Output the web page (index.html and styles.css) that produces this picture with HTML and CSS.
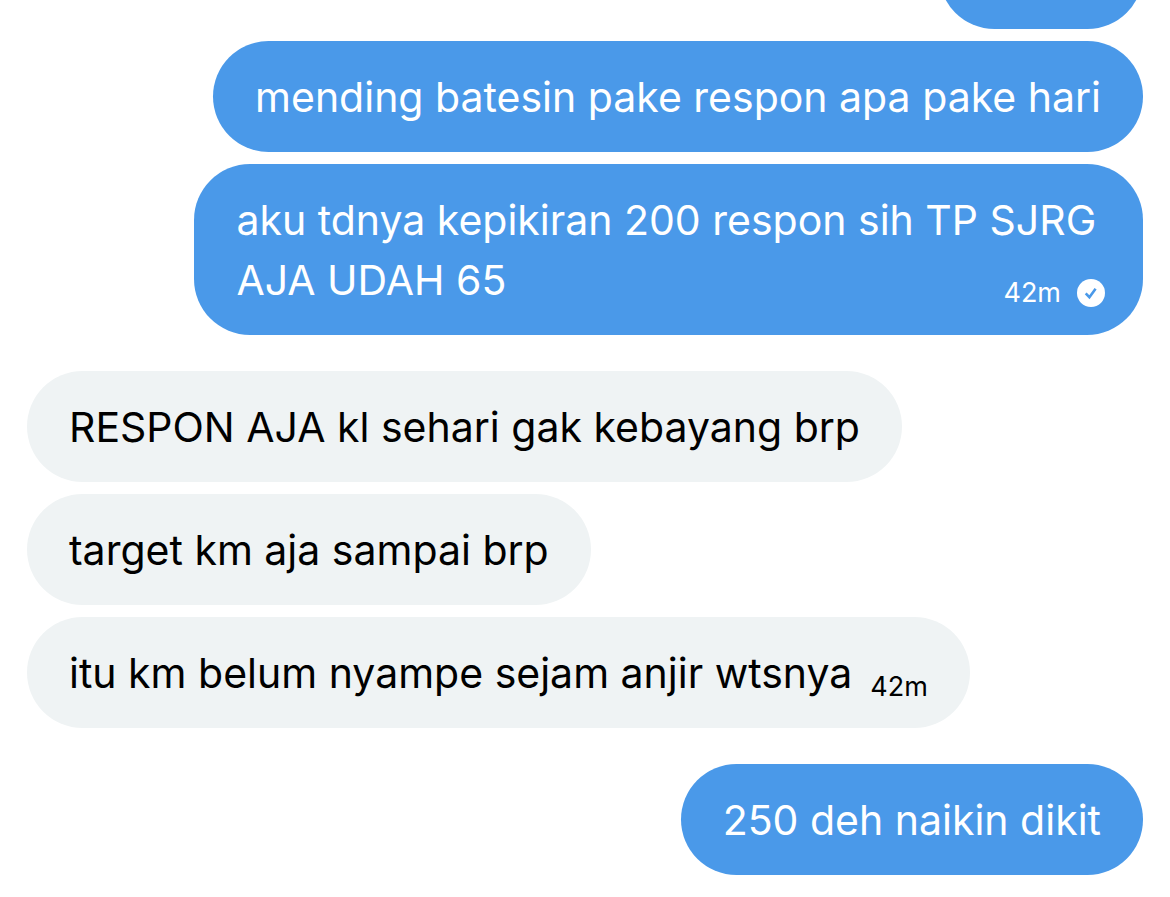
FILE: index.html
```
<!DOCTYPE html>
<html lang="id">
<head>
    <meta charset="UTF-8">
    <meta name="viewport" content="width=device-width, initial-scale=1.0">
    <title>Messages</title>
    <link rel="stylesheet" href="styles.css">
</head>
<body>
    <main class="chat">
        <section class="group sent">
            <div class="bubble partial"></div>
            <div class="bubble">
                <p>mending batesin pake respon apa pake hari</p>
            </div>
            <div class="bubble">
                <p>
                    aku tdnya kepikiran 200 respon sih TP SJRG AJA UDAH 65
                    <span class="meta">
                        <time>42m</time>
                        <svg class="check" viewBox="0 0 28 28" role="img" aria-label="Sent">
                            <circle cx="14" cy="14" r="14" fill="#fff"/>
                            <path d="M8.7 14.4l3.7 3.8 6.2-8.4" fill="none" stroke="#4a99e9" stroke-width="2.6"/>
                        </svg>
                    </span>
                </p>
            </div>
        </section>

        <section class="group received">
            <div class="bubble">
                <p>RESPON AJA kl sehari gak kebayang brp</p>
            </div>
            <div class="bubble">
                <p>target km aja sampai brp</p>
            </div>
            <div class="bubble inline-meta">
                <p>itu km belum nyampe sejam anjir wtsnya</p>
                <time>42m</time>
            </div>
        </section>

        <section class="group sent">
            <div class="bubble">
                <p>250 deh naikin dikit</p>
            </div>
        </section>
    </main>
</body>
</html>
```

FILE: styles.css
```
:root {
    --sent-bg: #4a99e9;
    --received-bg: #eff3f4;
}

* {
    box-sizing: border-box;
}

body {
    margin: 0;
    background-color: #fff;
    color: #000;
    font-family: Inter, "Liberation Sans", sans-serif;
    font-size: 41px;
    line-height: 60px;
}

p {
    margin: 0;
}

.chat {
    display: flex;
    flex-direction: column;
    gap: 36px;
    padding: 0 27px 22px;
    overflow: hidden;
}

.group {
    display: flex;
    flex-direction: column;
    gap: 12px;
}

.sent {
    align-items: flex-end;
}

.received {
    align-items: flex-start;
}

.bubble {
    max-width: 85%;
    padding: 26px 42px 25px;
    border-radius: 56px;
}

.sent .bubble {
    background-color: var(--sent-bg);
    color: #fff;
}

.received .bubble {
    background-color: var(--received-bg);
}

/* tail end of the previous message */
.sent .partial {
    width: 204px;
    height: 111px;
    margin-top: -82px;
}

/* sits at the end of the last line */
.meta {
    float: right;
    display: flex;
    align-items: center;
    gap: 16px;
    margin: 29px -4px 0 0;
}

time {
    font-size: 27px;
    line-height: 28px;
}

.check {
    display: block;
    width: 28px;
    height: 28px;
}

.inline-meta {
    display: flex;
    align-items: flex-end;
    gap: 18px;
}

.inline-meta time {
    padding-bottom: 2px;
}
```
